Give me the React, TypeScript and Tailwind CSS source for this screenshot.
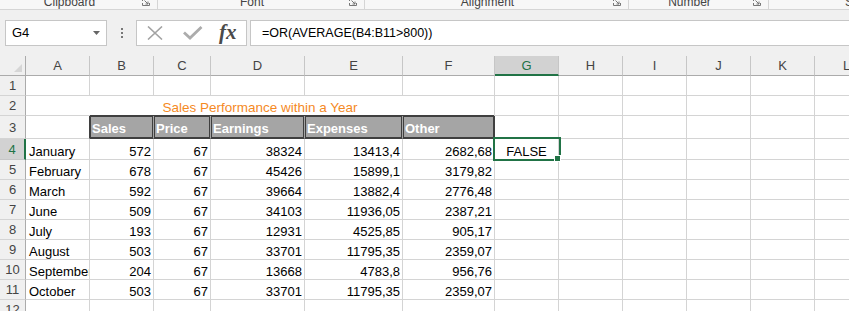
import clsx from "clsx"

const cols = [
  { id: "A", w: "w-[64px]" },
  { id: "B", w: "w-[64px]" },
  { id: "C", w: "w-[57px]" },
  { id: "D", w: "w-[94px]" },
  { id: "E", w: "w-[98px]" },
  { id: "F", w: "w-[92px]" },
  { id: "G", w: "w-[64px]" },
  { id: "H", w: "w-[64px]" },
  { id: "I", w: "w-[64px]" },
  { id: "J", w: "w-[64px]" },
  { id: "K", w: "w-[64px]" },
  { id: "L", w: "w-[64px]" },
]

const headers = ["Sales", "Price", "Earnings", "Expenses", "Other"]

const data = [
  ["January", "572", "67", "38324", "13413,4", "2682,68", "FALSE"],
  ["February", "678", "67", "45426", "15899,1", "3179,82"],
  ["March", "592", "67", "39664", "13882,4", "2776,48"],
  ["June", "509", "67", "34103", "11936,05", "2387,21"],
  ["July", "193", "67", "12931", "4525,85", "905,17"],
  ["August", "503", "67", "33701", "11795,35", "2359,07"],
  ["September", "204", "67", "13668", "4783,8", "956,76"],
  ["October", "503", "67", "33701", "11795,35", "2359,07"],
]

function Launcher() {
  return (
    <div className="w-[18px] shrink-0 flex justify-start pl-[3px] -mt-[2px]">
      <svg width="8" height="8" viewBox="0 0 8 8" fill="none" stroke="#777">
        <path d="M0.5 3 V0.5 H3" />
        <path d="M0.5 5 V7.5 H7.5 V5" />
        <path d="M2.5 2.5 L6 6 M6 3.5 V6 H3.5" />
      </svg>
    </div>
  )
}

function Group({ w, label }: { w: string; label: string }) {
  return (
    <div className={clsx(w, "shrink-0 flex border-r border-[#d5d5d5]")}>
      <div className="flex-1 text-center leading-[12px] -mt-[4px]">{label}</div>
      <Launcher />
    </div>
  )
}

function RowHead({ n, active }: { n: number; active?: boolean }) {
  return (
    <div
      className={clsx(
        "w-[26px] shrink-0 border-b flex items-center justify-center leading-[15px]",
        active
          ? "bg-[#d2d2d2] border-r-2 border-r-[#217346] border-b-[#c6c6c6] text-[#217346]"
          : "bg-[#f0f0f0] border-r border-r-[#ababab] border-b-[#d4d4d4] text-[#444]"
      )}
    >
      {n}
    </div>
  )
}

function DataCell({ w, text, align }: { w: string; text?: string; align: string }) {
  return (
    <div
      className={clsx(
        w,
        "shrink-0 border-r border-b border-[#d4d4d4] flex items-end overflow-hidden whitespace-nowrap leading-[15px]",
        align === "left" && "pl-[3px]",
        align === "right" && "justify-end pr-[2px]",
        align === "center" && "justify-center"
      )}
    >
      {text}
    </div>
  )
}

function EmptyRow({ n, h }: { n: number; h: string }) {
  return (
    <div className={clsx("flex", h)}>
      <RowHead n={n} />
      {cols.map((c) => (
        <DataCell key={c.id} w={c.w} align="left" />
      ))}
    </div>
  )
}

export default function App() {
  return (
    <div className="w-[849px] h-[311px] overflow-hidden bg-white text-[13px] text-black font-['Liberation_Sans',Arial,sans-serif]">
      {/* ribbon group labels, cut off at the top */}
      <div className="h-[10px] bg-[#f7f7f7] border-b border-[#d5d5d5] flex overflow-hidden text-[12px] text-[#444]">
        <Group w="w-[158px]" label="Clipboard" />
        <Group w="w-[207px]" label="Font" />
        <Group w="w-[264px]" label="Alignment" />
        <Group w="w-[140px]" label="Number" />
        <div className="flex-1 pl-[76px] leading-[12px] -mt-[4px] whitespace-nowrap">Styles</div>
      </div>

      <div className="bg-[#f0f0f0] pt-[10px] pb-[10px]">
        {/* formula bar */}
        <div className="flex h-[26px] pl-[5px]">
          <div className="w-[102px] shrink-0 bg-white border border-[#c6c6c6] flex items-center pl-[6px] pr-[6px]">
            <span>G4</span>
            <svg className="ml-auto" width="7" height="4" viewBox="0 0 7 4">
              <polygon points="0,0 7,0 3.5,4" fill="#666" />
            </svg>
          </div>
          <div className="w-[29px] shrink-0 flex flex-col items-center justify-center gap-[2px]">
            <div className="w-[2px] h-[2px] bg-[#777]" />
            <div className="w-[2px] h-[2px] bg-[#777]" />
            <div className="w-[2px] h-[2px] bg-[#777]" />
          </div>
          <div className="w-[111px] shrink-0 bg-white border border-[#c6c6c6] flex items-center">
            <svg className="ml-[10px]" width="16" height="14" viewBox="0 0 16 14" fill="none" stroke="#a3a3a3" strokeWidth="1.6">
              <path d="M1 0.5 L15 13.5 M15 0.5 L1 13.5" />
            </svg>
            <svg className="ml-[20px]" width="20" height="14" viewBox="0 0 20 14" fill="none" stroke="#acacac" strokeWidth="2.8">
              <path d="M1 6.5 L7 12 L18.5 1" />
            </svg>
            <span className="ml-[16px] font-['Liberation_Serif',serif] italic font-semibold text-[21px] leading-[20px] text-[#4a4a4a] -mt-[3px]">
              fx
            </span>
          </div>
          <div className="w-[3px] shrink-0" />
          <div className="flex-1 bg-white border-y border-l border-[#c6c6c6] flex items-center pl-[11px] text-[12.5px] whitespace-nowrap">
            =OR(AVERAGE(B4:B11&gt;800))
          </div>
        </div>
      </div>

      {/* sheet grid */}
      <div className="relative">
        <div className="flex h-[20px] bg-[#f0f0f0] text-[#444]">
          <div className="w-[26px] shrink-0 border-r border-b border-[#ababab] flex items-end justify-end pr-[3px] pb-[3px]">
            <svg width="8" height="8" viewBox="0 0 8 8">
              <polygon points="8,0 8,8 0,8" fill="#d6d6d6" />
            </svg>
          </div>
          {cols.map((c) =>
            c.id === "G" ? (
              <div
                key={c.id}
                className={clsx(
                  c.w,
                  "shrink-0 border-r border-r-[#c6c6c6] border-b-2 border-b-[#217346] bg-[#d2d2d2] text-[#217346] flex items-center justify-center leading-[15px]"
                )}
              >
                {c.id}
              </div>
            ) : (
              <div
                key={c.id}
                className={clsx(
                  c.w,
                  "shrink-0 border-r border-r-[#c6c6c6] border-b border-b-[#ababab] flex items-center justify-center leading-[15px]"
                )}
              >
                {c.id}
              </div>
            )
          )}
        </div>

        <EmptyRow n={1} h="h-[20px]" />

        {/* row 2: merged A2:F2 title */}
        <div className="flex h-[20px]">
          <RowHead n={2} />
          <div className="w-[469px] shrink-0 border-r border-[#d4d4d4] flex flex-col">
            <div className="flex-1 flex items-end justify-center leading-[15px] text-[13.5px] text-[#f58a1f] whitespace-nowrap">
              Sales Performance within a Year
            </div>
            <div className="flex h-[1px]">
              <div className="w-[64px] bg-[#d4d4d4]" />
              <div className="flex-1 bg-[#3f3f3f]" />
            </div>
          </div>
          {cols.slice(6).map((c) => (
            <DataCell key={c.id} w={c.w} align="left" />
          ))}
        </div>

        {/* row 3: check-cell headers */}
        <div className="flex h-[23px]">
          <RowHead n={3} />
          <div className="w-[64px] shrink-0 border-r border-r-[#3f3f3f] border-b border-b-[#d4d4d4]" />
          {headers.map((t, i) => (
            <div
              key={t}
              className={clsx(
                cols[i + 1].w,
                "shrink-0 bg-[#a5a5a5] border-r border-b border-b-[#3f3f3f]",
                i === 4 ? "border-r-[#3f3f3f]" : "border-r-[#a5a5a5]"
              )}
            >
              <div className="h-full border border-[#3f3f3f] flex items-end pl-[1px] pb-[1px] leading-[15px] font-bold text-white whitespace-nowrap">
                {t}
              </div>
            </div>
          ))}
          {cols.slice(6).map((c) => (
            <DataCell key={c.id} w={c.w} align="left" />
          ))}
        </div>

        {data.map((row, r) => (
          <div key={r} className={clsx("flex", r === 0 ? "h-[21px]" : "h-[20px]")}>
            <RowHead n={r + 4} active={r === 0} />
            {cols.map((c, i) => (
              <DataCell
                key={c.id}
                w={c.w}
                text={row[i]}
                align={i === 0 ? "left" : i === 6 ? "center" : "right"}
              />
            ))}
          </div>
        ))}

        <EmptyRow n={12} h="h-[20px]" />

        {/* active cell G4 */}
        <div className="absolute left-[493px] top-[81px] w-[68px] h-[24px] border-2 border-[#217346] pointer-events-none">
          <div className="absolute right-[-2px] bottom-[-3px] w-[7px] h-[7px] bg-[#217346] border border-white" />
        </div>
      </div>
    </div>
  )
}
